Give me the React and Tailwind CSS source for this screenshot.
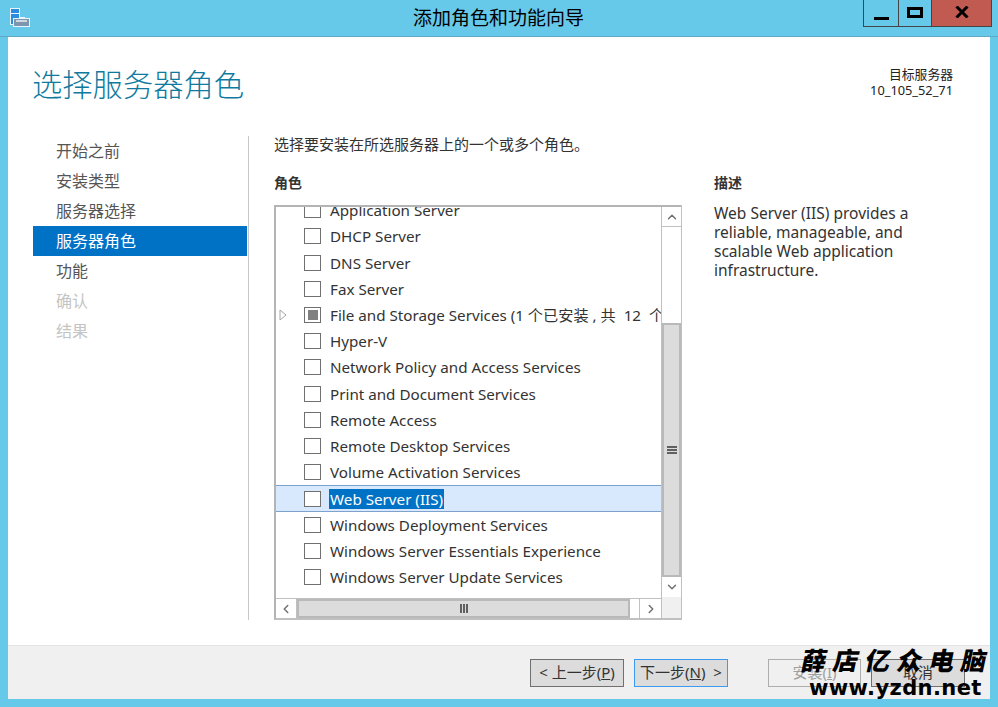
import { ChevronUp, ChevronDown, ChevronLeft, ChevronRight } from "lucide-react";

const font = { fontFamily: '"Noto Sans", "Noto Sans CJK SC", sans-serif' };

const steps = [
  { label: "开始之前", color: "text-[#555]" },
  { label: "安装类型", color: "text-[#555]" },
  { label: "服务器选择", color: "text-[#555]" },
  { label: "服务器角色", active: true },
  { label: "功能", color: "text-[#555]" },
  { label: "确认", color: "text-[#c4c4c4]" },
  { label: "结果", color: "text-[#c4c4c4]" },
];

const roles = [
  "Application Server",
  "DHCP Server",
  "DNS Server",
  "Fax Server",
  "File and Storage Services (1 个已安装 , 共\u00a0 12\u00a0 个",
  "Hyper-V",
  "Network Policy and Access Services",
  "Print and Document Services",
  "Remote Access",
  "Remote Desktop Services",
  "Volume Activation Services",
  "Web Server (IIS)",
  "Windows Deployment Services",
  "Windows Server Essentials Experience",
  "Windows Server Update Services",
];

const AppIcon = () => (
  <svg width="20" height="20" viewBox="0 0 20 20">
    <rect x="0.5" y="0.5" width="9" height="16" fill="#2b8ce0" stroke="#e8f4fb" />
    <rect x="1" y="5" width="8" height="1" fill="#e8f4fb" />
    <rect x="10" y="9" width="5" height="2" fill="#e8f4fb" />
    <rect x="3.5" y="10.5" width="16" height="8" fill="#7d96ae" stroke="#e8f4fb" />
    <rect x="6" y="12" width="11" height="2" fill="#cfd8e0" />
  </svg>
);

const WindowButtons = () => (
  <div className="flex h-[27px] self-start border-b border-x border-[#444]">
    <div className="flex w-[35px] items-end justify-center pb-[6px] border-r border-[#444]">
      <div className="h-[3px] w-[15px] bg-black" />
    </div>
    <div className="flex w-[33px] items-center justify-center border-r border-[#444] pb-[2px]">
      <div className="h-[11px] w-[16px] border-[3px] border-black" />
    </div>
    <div className="flex w-[59px] items-center justify-center bg-[#c15a50] pb-[2px]">
      <svg width="14" height="12" viewBox="0 0 14 12">
        <path d="M1.5 0.5 L12.5 11.5 M12.5 0.5 L1.5 11.5" stroke="#000" strokeWidth="3" />
      </svg>
    </div>
  </div>
);

const Checkbox = ({ partial }) => (
  <div className="flex h-[16px] w-[17px] shrink-0 items-center justify-center border border-[#707070] bg-white">
    {partial && <div className="h-[10px] w-[10px] bg-[#808080]" />}
  </div>
);

const RoleRow = ({ name }) => {
  const selected = name === "Web Server (IIS)";
  const expandable = name.startsWith("File and");
  return (
    <div
      className={`flex h-[26.23px] items-center whitespace-nowrap ${
        selected ? "border-y border-[#7da2ce] bg-[#d9e9fd]" : ""
      }`}
    >
      <div className="flex w-[28px] shrink-0 pl-[3px]">
        {expandable && (
          <svg width="8" height="12" viewBox="0 0 8 12">
            <path d="M1 1 L7 6 L1 11 Z" fill="none" stroke="#a6a6a6" />
          </svg>
        )}
      </div>
      <Checkbox partial={expandable} />
      <span
        className={`ml-[8px] px-[1px] text-[15.2px] leading-[20px] ${
          selected ? "bg-[#0072c6] text-white" : "text-[#333]"
        }`}
      >
        {name}
      </span>
    </div>
  );
};

const VerticalScroll = () => (
  <div className="flex w-[20px] shrink-0 flex-col border-l border-[#c0c0c0] bg-white">
    <div className="flex h-[20px] items-center justify-center border-b border-[#c0c0c0]">
      <ChevronUp size={14} strokeWidth={2.5} className="text-[#707070]" />
    </div>
    <div className="h-[96px]" />
    <div className="flex h-[254px] items-center justify-center border-2 border-[#b9b9b9] bg-[#dcdcdc]">
      <div className="flex w-[10px] flex-col gap-[1px]">
        <div className="h-[2px] bg-[#606060]" />
        <div className="h-[2px] bg-[#606060]" />
        <div className="h-[2px] bg-[#606060]" />
      </div>
    </div>
    <div className="flex h-[20px] items-center justify-center">
      <ChevronDown size={14} strokeWidth={2.5} className="text-[#707070]" />
    </div>
    <div className="flex-1 bg-[#f0f0f0]" />
  </div>
);

const HorizontalScroll = () => (
  <div className="flex h-[20px] w-[385px] items-stretch border-t border-[#c0c0c0] bg-white">
    <div className="flex w-[21px] items-center justify-center border-r border-[#c0c0c0]">
      <ChevronLeft size={14} strokeWidth={2.5} className="text-[#707070]" />
    </div>
    <div className="flex w-[333px] items-center justify-center border-2 border-[#b9b9b9] bg-[#dcdcdc]">
      <div className="flex h-[9px] gap-[1px]">
        <div className="w-[2px] bg-[#606060]" />
        <div className="w-[2px] bg-[#606060]" />
        <div className="w-[2px] bg-[#606060]" />
      </div>
    </div>
    <div className="w-[10px] border-r border-[#c0c0c0]" />
    <div className="flex flex-1 items-center justify-center">
      <ChevronRight size={14} strokeWidth={2.5} className="text-[#707070]" />
    </div>
  </div>
);

const FooterButton = ({ children, className }) => (
  <button
    className={`flex h-[28px] items-center justify-center whitespace-pre border text-[15px] leading-none ${className}`}
  >
    {children}
  </button>
);

export default function App() {
  return (
    <div
      style={font}
      className="relative flex h-[707px] w-[998px] flex-col overflow-hidden bg-[#67c9ea] px-[8px] pb-[8px]"
    >
      {/* title bar */}
      <div className="-mx-[8px] grid h-[37px] shrink-0 grid-cols-[1fr_auto_1fr] items-center border-b border-[#5fa9c5] pl-[10px] pr-[6px]">
        <AppIcon />
        <div className="pr-[5px] text-center text-[19px] text-black">添加角色和功能向导</div>
        <div className="flex h-full justify-end">
          <WindowButtons />
        </div>
      </div>

      <div className="flex flex-1 flex-col bg-white">
        {/* header */}
        <div className="flex h-[99px] shrink-0 items-start justify-between pl-[24px] pr-[37px]">
          <h1 className="mt-[26px] text-[30.3px] leading-[44px] font-light text-[#0f7a9e]">选择服务器角色</h1>
          <div className="mt-[29px] text-right text-[12.8px] leading-[16px] text-[#222]">
            <div>目标服务器</div>
            <div>10_105_52_71</div>
          </div>
        </div>

        <div className="flex flex-1">
          {/* steps */}
          <div className="h-[484px] w-[241px] shrink-0 border-r border-[#c8c8c8]">
            <div className="ml-[25px] w-[214px]">
              {steps.map((s) => (
                <div
                  key={s.label}
                  className={`flex h-[30px] items-center pl-[23px] text-[16px] ${
                    s.active ? "bg-[#0072c6] text-white" : s.color
                  }`}
                >
                  {s.label}
                </div>
              ))}
            </div>
          </div>

          {/* main */}
          <div className="flex flex-1 flex-col pl-[25px]">
            <p className="-mt-[2px] h-[39px] text-[15px] leading-[20px] text-[#333]">选择要安装在所选服务器上的一个或多个角色。</p>
            <div className="flex">
              <div className="w-[440px] shrink-0">
                <h2 className="mb-[12px] text-[14px] leading-[20px] font-bold text-[#333]">角色</h2>
                <div className="flex h-[415px] w-[408px] border-2 border-[#b4b4b4] border-r-[#c0c0c0] border-b-[#c0c0c0]">
                  <div className="flex w-[385px] flex-col">
                    <div className="h-[393px] overflow-hidden">
                      <div className="-mt-[10px]">
                        {roles.map((r) => (
                          <RoleRow key={r} name={r} />
                        ))}
                      </div>
                    </div>
                    <HorizontalScroll />
                  </div>
                  <VerticalScroll />
                </div>
              </div>
              <div className="w-[215px]">
                <h2 className="mb-[11px] text-[14px] leading-[20px] font-bold text-[#333]">描述</h2>
                <p className="text-[15.5px] leading-[19px] text-[#333]">
                  Web Server (IIS) provides a reliable, manageable, and scalable Web application infrastructure.
                </p>
              </div>
            </div>
          </div>
        </div>

        {/* footer */}
        <div className="relative flex h-[54px] shrink-0 items-center border-t border-[#e3e3e3] bg-[#f0f0f0] pl-[522px]">
          <FooterButton className="w-[94px] border-[#707070] bg-[#dcdcdc] text-[#333]">
            &lt; 上一步(<u>P</u>)
          </FooterButton>
          <FooterButton className="ml-[10px] w-[94px] border-[#3c9bf0] bg-[#dcdcdc] text-[#333]">
            下一步(<u>N</u>)  &gt;
          </FooterButton>
          <FooterButton className="ml-[40px] w-[93px] border-[#adadad] bg-[#f0f0f0] text-[#a0a0a0]">
            安装(<u>I</u>)
          </FooterButton>
          <FooterButton className="ml-[10px] w-[94px] border-[#707070] bg-[#dcdcdc] text-[#333]">
            取消
          </FooterButton>
        </div>
      </div>

      {/* watermark */}
      <div className="absolute left-[802px] top-[642px] w-[190px] text-black">
        <div className="-skew-x-12 text-[25px] leading-[36px] font-black tracking-[7px] whitespace-nowrap">薛店亿众电脑</div>
        <div className="-mt-[2px] pl-[7px] text-[21px] leading-[24px] font-bold tracking-[0.4px] whitespace-nowrap" style={{ fontFamily: '"DejaVu Sans", sans-serif' }}>
          www.yzdn.net
        </div>
      </div>
    </div>
  );
}
